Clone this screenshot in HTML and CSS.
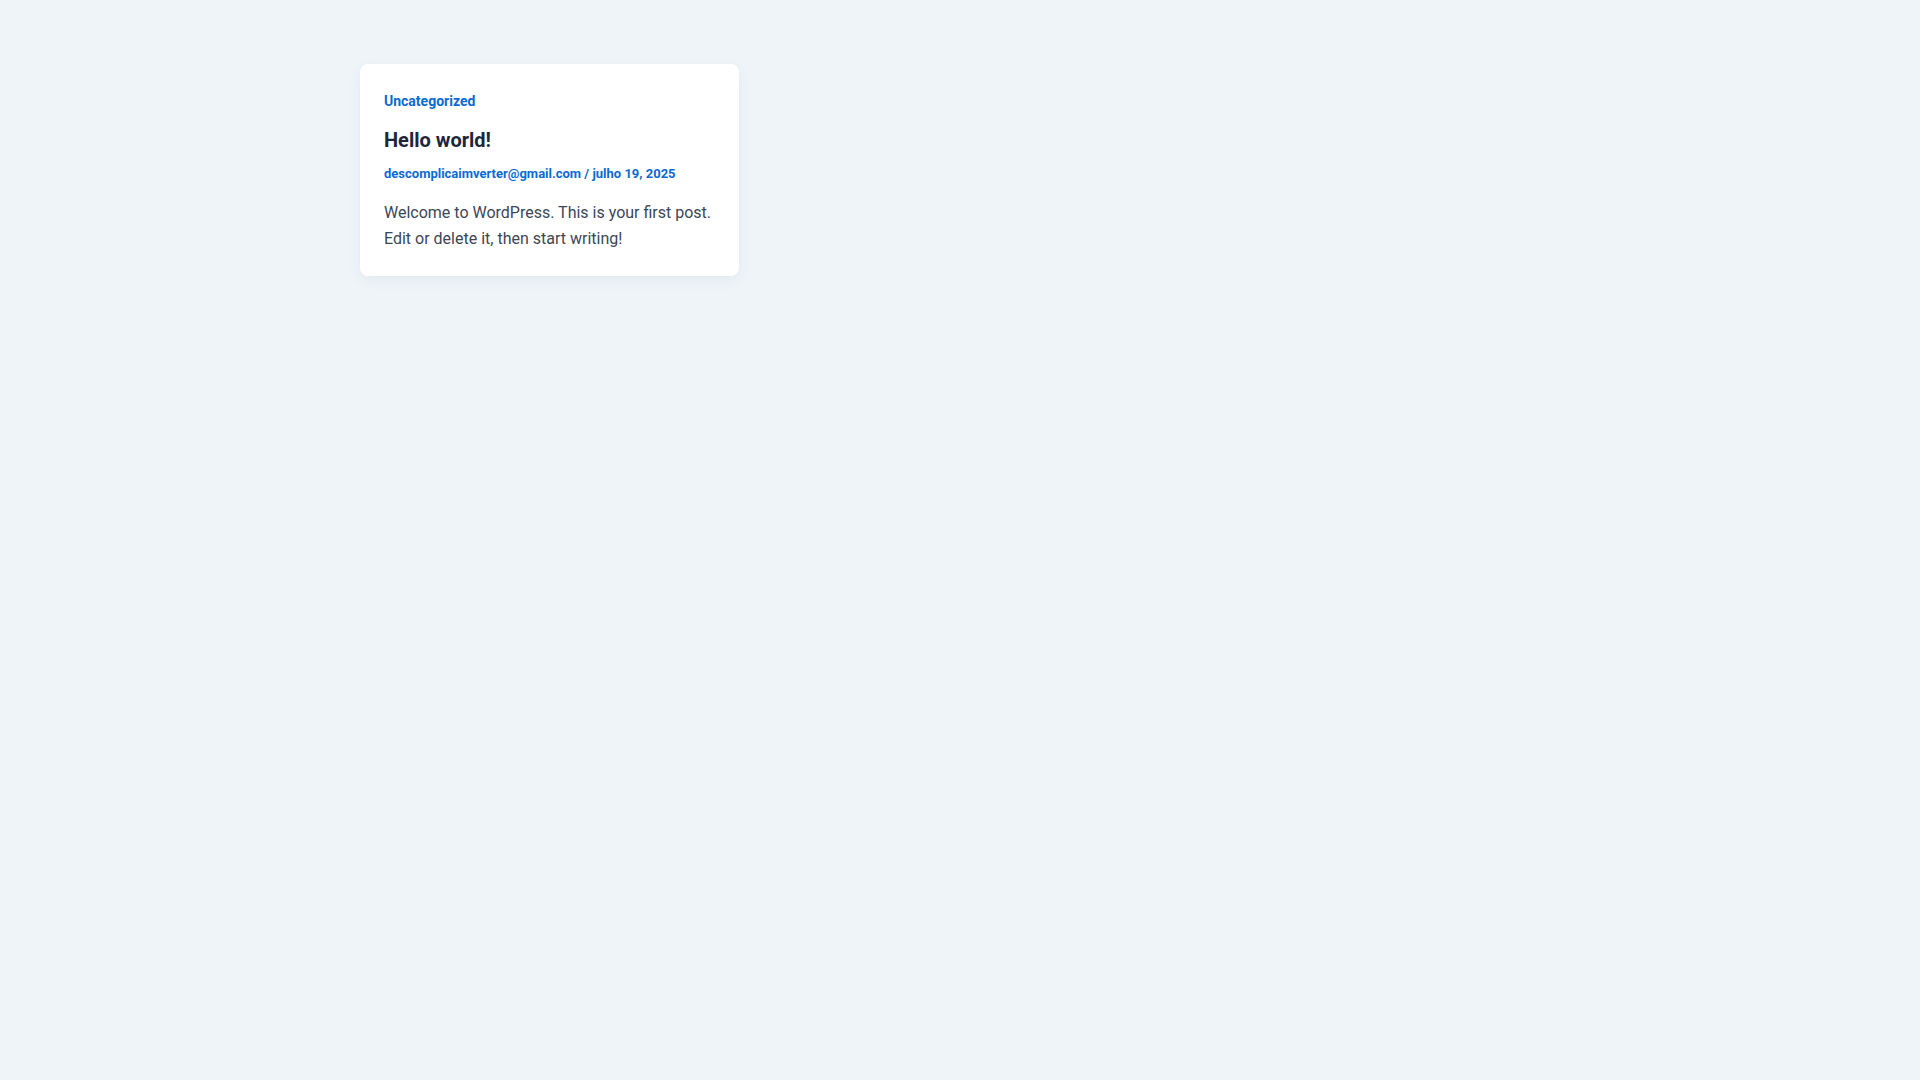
FILE: index.html
```html
<!DOCTYPE html>
<html lang="pt-BR">
<head>
<meta charset="utf-8">
<title>Hello world!</title>
<link rel="stylesheet" href="styles.css">
</head>
<body>
<main class="container">
  <div class="posts">
    <article class="card">
      <a class="category" href="#">Uncategorized</a>
      <h2 class="title">Hello world!</h2>
      <div class="meta"><a href="#">descomplicaimverter@gmail.com</a> / <a href="#">julho 19, 2025</a></div>
      <p class="excerpt">Welcome to WordPress. This is your first post. Edit or delete it, then start writing!</p>
    </article>
  </div>
</main>
</body>
</html>
```
FILE: styles.css
```css
html, body {
  margin: 0;
  padding: 0;
}
body {
  background: #eff4f8;
  font-family: Roboto, "Liberation Sans", Arial, sans-serif;
  min-height: 100vh;
}
.container {
  max-width: 1200px;
  margin: 0 auto;
  padding: 64px 0;
}
.posts {
  display: grid;
  grid-template-columns: repeat(3, 1fr);
  gap: 32px;
}
.card {
  background: #ffffff;
  border-radius: 8px;
  padding: 24px;
  box-shadow: 0 4px 14px rgba(30, 60, 100, 0.06);
}
.category {
  display: block;
  font-size: 14px;
  line-height: 26px;
  font-weight: 700;
  color: #0b6ad3;
  text-decoration: none;
  margin-bottom: 13px;
}
.title {
  margin: 0 0 11px;
  font-size: 20px;
  line-height: 26px;
  font-weight: 700;
  color: #1e2738;
}
.meta {
  font-size: 13px;
  line-height: 19px;
  font-weight: 700;
  color: #0b6ad3;
  margin-bottom: 17px;
}
.meta a {
  color: inherit;
  text-decoration: none;
}
.excerpt {
  margin: 0;
  font-size: 16px;
  line-height: 26px;
  color: #3c4657;
}
```
